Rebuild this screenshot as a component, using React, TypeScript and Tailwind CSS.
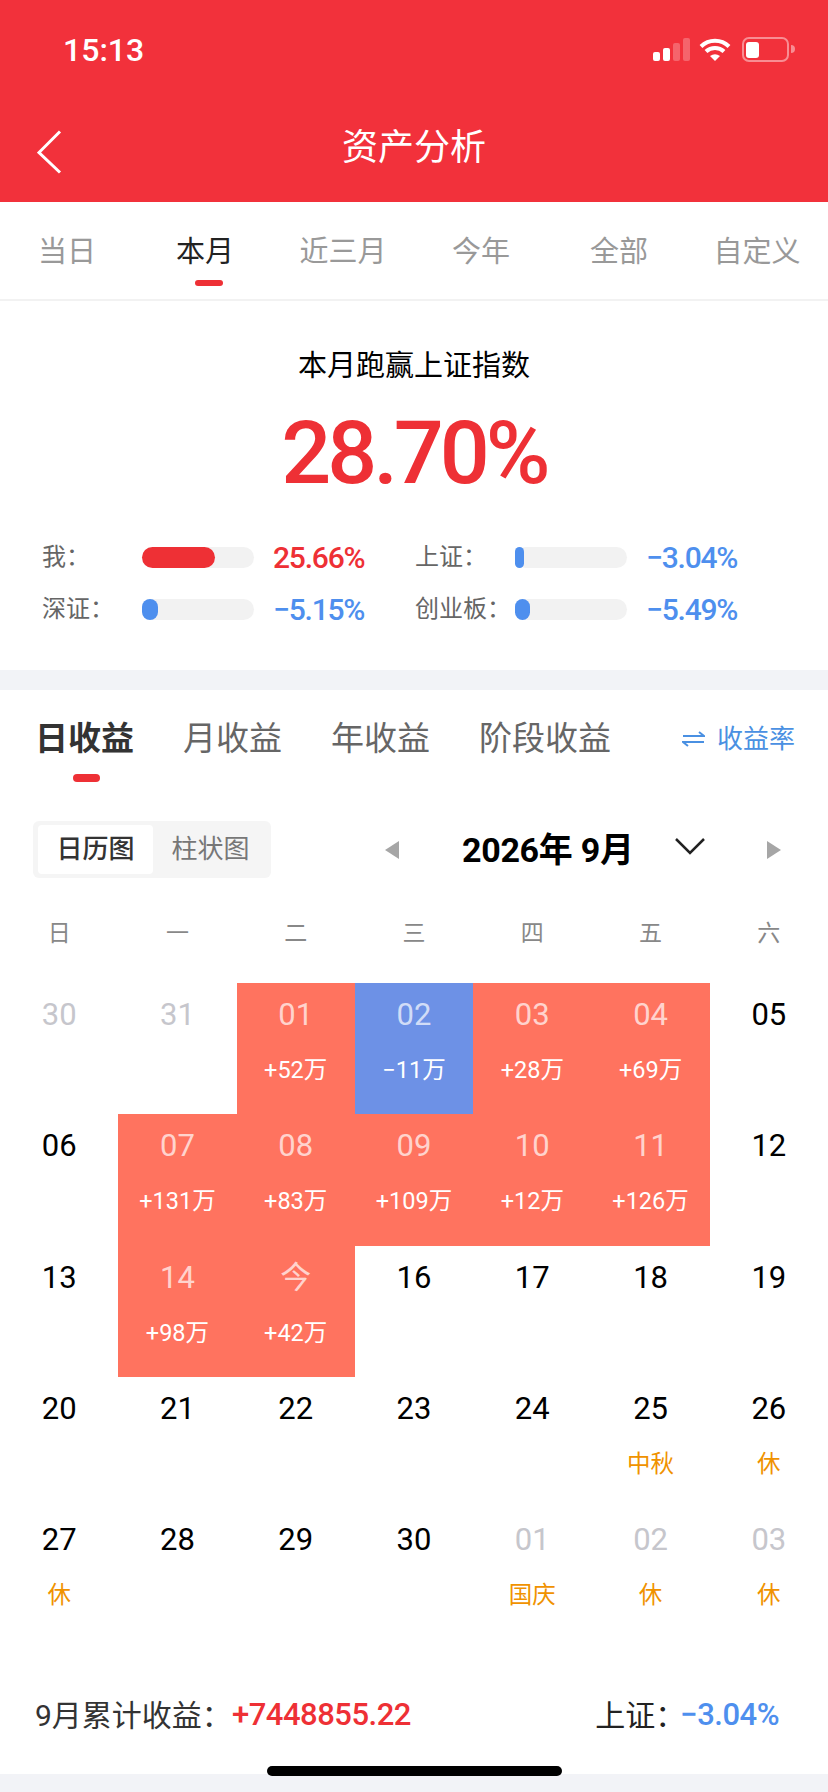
import React from "react";

type Kind = "muted" | "normal" | "up" | "down";
type Day = { d: string; kind: Kind; sub?: string };

const periodTabs = ["当日", "本月", "近三月", "今年", "全部", "自定义"];
const weekDays = ["日", "一", "二", "三", "四", "五", "六"];

const days: Day[] = [
  { d: "30", kind: "muted" },
  { d: "31", kind: "muted" },
  { d: "01", kind: "up", sub: "+52万" },
  { d: "02", kind: "down", sub: "−11万" },
  { d: "03", kind: "up", sub: "+28万" },
  { d: "04", kind: "up", sub: "+69万" },
  { d: "05", kind: "normal" },
  { d: "06", kind: "normal" },
  { d: "07", kind: "up", sub: "+131万" },
  { d: "08", kind: "up", sub: "+83万" },
  { d: "09", kind: "up", sub: "+109万" },
  { d: "10", kind: "up", sub: "+12万" },
  { d: "11", kind: "up", sub: "+126万" },
  { d: "12", kind: "normal" },
  { d: "13", kind: "normal" },
  { d: "14", kind: "up", sub: "+98万" },
  { d: "今", kind: "up", sub: "+42万" },
  { d: "16", kind: "normal" },
  { d: "17", kind: "normal" },
  { d: "18", kind: "normal" },
  { d: "19", kind: "normal" },
  { d: "20", kind: "normal" },
  { d: "21", kind: "normal" },
  { d: "22", kind: "normal" },
  { d: "23", kind: "normal" },
  { d: "24", kind: "normal" },
  { d: "25", kind: "normal", sub: "中秋" },
  { d: "26", kind: "normal", sub: "休" },
  { d: "27", kind: "normal", sub: "休" },
  { d: "28", kind: "normal" },
  { d: "29", kind: "normal" },
  { d: "30", kind: "normal" },
  { d: "01", kind: "muted", sub: "国庆" },
  { d: "02", kind: "muted", sub: "休" },
  { d: "03", kind: "muted", sub: "休" },
];

const compare = [
  { label: "我：", value: "25.66%", fill: 73, up: true },
  { label: "上证：", value: "−3.04%", fill: 9, up: false },
  { label: "深证：", value: "−5.15%", fill: 16, up: false },
  { label: "创业板：", value: "−5.49%", fill: 15, up: false },
];

function StatusIcons() {
  return (
    <svg width="145" height="30" viewBox="0 0 145 30" fill="none">
      <rect x="1" y="17" width="7" height="9" rx="2" fill="#fff" />
      <rect x="11" y="13" width="7" height="13" rx="2" fill="#fff" />
      <rect x="21" y="8" width="7" height="18" rx="2" fill="#fff" fillOpacity="0.25" />
      <rect x="31" y="3" width="7" height="23" rx="2" fill="#fff" fillOpacity="0.25" />
      <path d="M49 11.5A20 20 0 0 1 77 11.5" stroke="#fff" strokeWidth="4" />
      <path d="M54 16.5A13 13 0 0 1 72 16.5" stroke="#fff" strokeWidth="4" />
      <path d="M58 21Q63 17.5 68 21L63 26Z" fill="#fff" />
      <rect x="91" y="3" width="45" height="23" rx="6" stroke="#fff" strokeOpacity="0.45" strokeWidth="2" />
      <rect x="94" y="7" width="13" height="16" rx="3" fill="#fff" />
      <path d="M139 10a4 4 0 0 1 0 8Z" fill="#fff" fillOpacity="0.45" />
    </svg>
  );
}

function CalendarCell({ day }: { day: Day }) {
  const bg = day.kind === "up" ? "bg-[#ff735f]" : day.kind === "down" ? "bg-[#6d91e6]" : "";
  const dateColor =
    day.kind === "muted"
      ? "text-[#c6c6cc]"
      : day.kind === "normal"
        ? "text-black"
        : "text-white/70";
  const subColor = day.kind === "up" || day.kind === "down" ? "text-white" : "text-[#f09200]";

  return (
    <div className={`flex h-[131.3px] flex-col items-center pt-[14px] ${bg}`}>
      <span className={`text-[31px] leading-[36px] ${dateColor}`}>{day.d}</span>
      {day.sub && <span className={`mt-[21px] text-[23.5px] leading-[32px] ${subColor}`}>{day.sub}</span>}
    </div>
  );
}

export default function App() {
  return (
    <div className="relative flex h-[1792px] w-[828px] flex-col overflow-hidden bg-white font-[Roboto,'Noto_Sans_CJK_SC',sans-serif]">
      <div className="h-[202px] bg-[#f2313b] text-white">
        <div className="flex h-[100px] items-center justify-between pl-[63px] pr-[31px]">
          <span className="text-[32px] font-medium leading-none">15:13</span>
          <StatusIcons />
        </div>
        <div className="grid h-[96px] grid-cols-[1fr_auto_1fr] items-center pl-[37px]">
          <svg className="mt-[8px]" width="25" height="44" viewBox="0 0 25 44" fill="none">
            <path d="M23 1.5L2 22.5L23 42.5" stroke="#fff" strokeWidth="3" />
          </svg>
          <h1 className="-ml-[37px] text-[36px] font-normal leading-none">资产分析</h1>
        </div>
      </div>

      <div className="-ml-[2px] grid h-[97px] w-[828px] grid-cols-6">
        {periodTabs.map((tab, i) => (
          <div key={tab} className="flex flex-col items-center pt-[30px]">
            <span className={`text-[29px] leading-[40px] ${i === 1 ? "text-[#222]" : "text-[#999]"}`}>{tab}</span>
            {i === 1 && <div className="ml-[7px] mt-[8px] h-[6px] w-[28px] rounded-full bg-[#ee3035]" />}
          </div>
        ))}
      </div>
      <div className="h-[2px] bg-[#f2f2f2]" />

      <div className="flex flex-col items-center pb-[50px] pt-[45px]">
        <div className="text-[29px] leading-[40px] text-black">本月跑赢上证指数</div>
        <div className="mt-[17px] text-[88px] font-medium leading-[100px] tracking-[-4px] text-[#ee3035]">28.70%</div>
        <div className="mt-[44px] grid grid-cols-[373px_372px] gap-y-[31px] self-start pl-[42px]">
          {compare.map((item) => (
            <div key={item.label} className="flex h-[21px] items-center">
              <span className="w-[100px] text-[24px] leading-[21px] text-[#666]">{item.label}</span>
              <div className="h-[21px] w-[112px] rounded-full bg-[#f2f2f2]">
                <div
                  className={`h-full rounded-full ${item.up ? "bg-[#ee3035]" : "bg-[#4e8fee]"}`}
                  style={{ width: item.fill }}
                />
              </div>
              <span className={`ml-[19px] text-[30px] font-medium leading-[21px] tracking-[-1.2px] ${item.up ? "text-[#ee3035]" : "text-[#4e8fee]"}`}>
                {item.value}
              </span>
            </div>
          ))}
        </div>
      </div>

      <div className="h-[20px] bg-[#f2f3f7]" />

      <div className="flex items-start pl-[35px] pr-[33px] pt-[27px]">
        <div className="flex flex-col items-center">
          <span className="text-[33px] font-bold leading-[44px] text-[#333]">日收益</span>
          <div className="ml-[3px] mt-[13px] h-[8px] w-[27px] rounded-full bg-[#ee3035]" />
        </div>
        <span className="ml-[49px] text-[33px] leading-[44px] text-[#666]">月收益</span>
        <span className="ml-[49px] text-[33px] leading-[44px] text-[#666]">年收益</span>
        <span className="ml-[49px] text-[33px] leading-[44px] text-[#666]">阶段收益</span>
        <div className="ml-auto flex h-[44px] items-center gap-[12px] text-[26px] text-[#4a90e2]">
          <svg width="23" height="16" viewBox="0 0 23 16" fill="none">
            <path d="M1 5H22L17 1M22 11H1L6 15" stroke="#4a90e2" strokeWidth="2" />
          </svg>
          <span>收益率</span>
        </div>
      </div>

      <div className="mt-[39px] flex items-center pl-[33px]">
        <div className="flex h-[57px] w-[238px] rounded-md bg-[#f5f5f5] pb-[4px] pl-[5px] pr-[3px] pt-[4px] text-[26px]">
          <div className="flex w-[115px] items-center justify-center rounded-sm bg-white font-medium text-[#333]">日历图</div>
          <div className="flex w-[115px] items-center justify-center text-[#777]">柱状图</div>
        </div>
        <svg className="ml-[114px]" width="14" height="18" viewBox="0 0 14 18">
          <path d="M14 0V18L0 9Z" fill="#a6a6a6" />
        </svg>
        <span className="ml-[63px] w-[169px] whitespace-nowrap text-[34px] font-bold leading-none tracking-[-0.3px] text-black">2026年 9月</span>
        <svg className="-mt-[6px] ml-[44px]" width="30" height="17" viewBox="0 0 30 17" fill="none">
          <path d="M1 1L15 15L29 1" stroke="#222" strokeWidth="2.5" />
        </svg>
        <svg className="ml-[62px]" width="14" height="18" viewBox="0 0 14 18">
          <path d="M0 0V18L14 9Z" fill="#a6a6a6" />
        </svg>
      </div>

      <div className="mb-[34px] mt-[41px] grid grid-cols-7">
        {weekDays.map((w) => (
          <div key={w} className="text-center text-[23px] leading-[30px] text-[#888]">{w}</div>
        ))}
      </div>

      <div className="grid grid-cols-7">
        {days.map((day, i) => (
          <CalendarCell key={i} day={day} />
        ))}
      </div>

      <div className="mt-[56px] flex h-[40px] items-center justify-between pl-[35px] pr-[49px]">
        <div className="flex items-center">
          <span className="w-[197px] whitespace-nowrap text-[30px] text-[#333]">9月累计收益：</span>
          <span className="text-[31px] font-medium tracking-[-0.5px] text-[#ee3035]">+7448855.22</span>
        </div>
        <div className="flex items-center">
          <span className="w-[85px] whitespace-nowrap text-[30px] text-[#222]">上证：</span>
          <span className="text-[31px] font-medium tracking-[-0.5px] text-[#4e8fee]">−3.04%</span>
        </div>
      </div>

      <div className="mt-auto h-[18px] bg-[#f2f3f7]" />
      <div className="absolute bottom-[16px] left-[267px] h-[10px] w-[295px] rounded-full bg-black" />
    </div>
  );
}
